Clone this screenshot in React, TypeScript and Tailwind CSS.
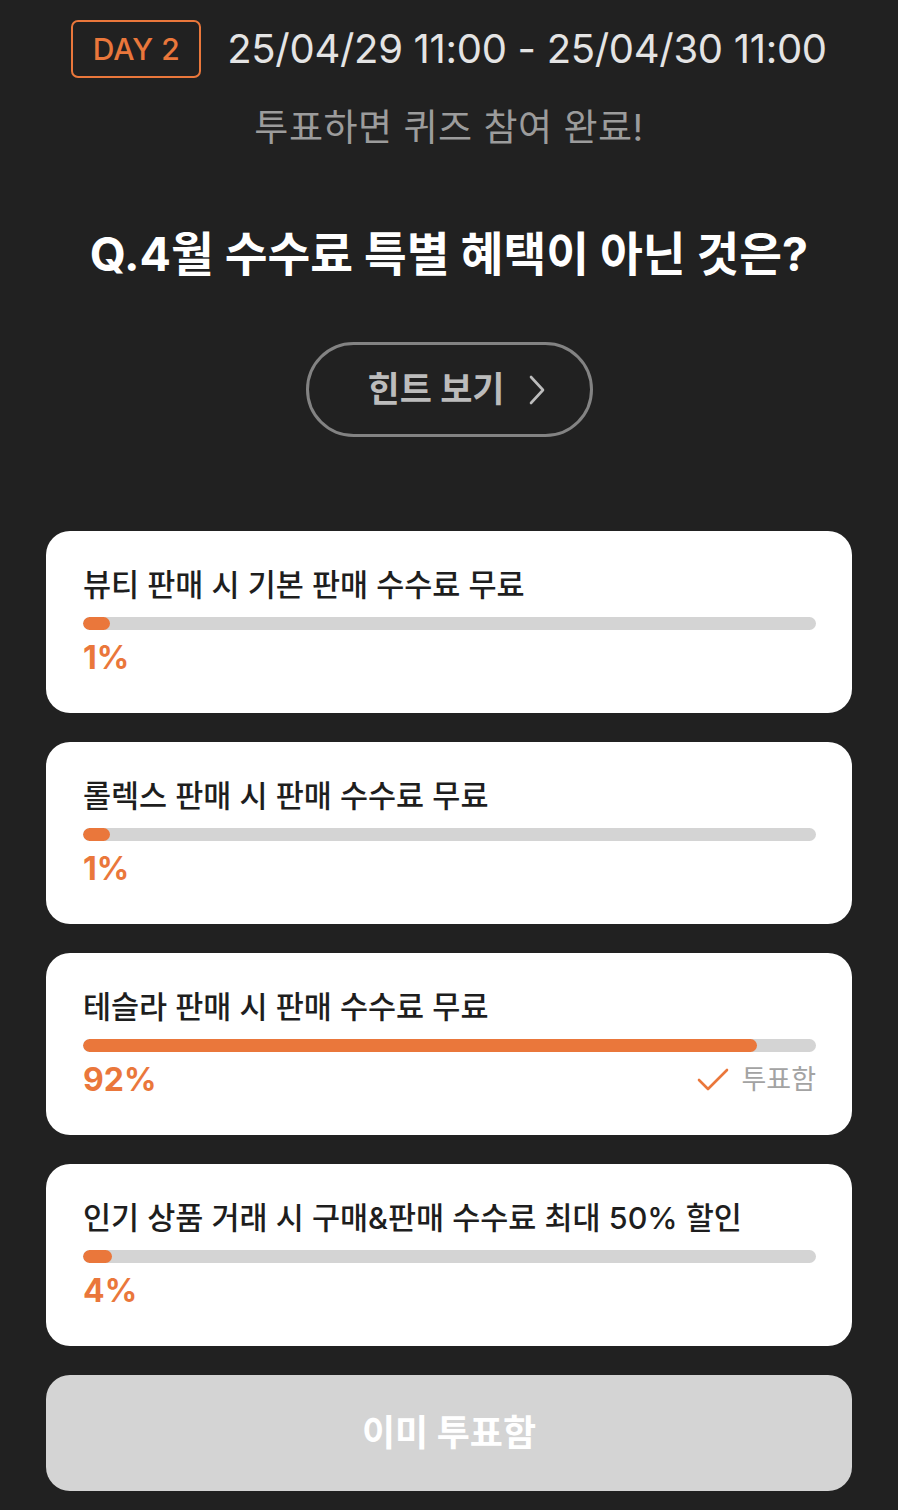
import React from 'react';

interface Option {
  label: string;
  pct: number;
  voted?: boolean;
}

const options: Option[] = [
  { label: '뷰티 판매 시 기본 판매 수수료 무료', pct: 1 },
  { label: '롤렉스 판매 시 판매 수수료 무료', pct: 1 },
  { label: '테슬라 판매 시 판매 수수료 무료', pct: 92, voted: true },
  { label: '인기 상품 거래 시 구매&판매 수수료 최대 50% 할인', pct: 4 },
];

const font = { fontFamily: 'Inter, "Noto Sans CJK KR", sans-serif' };

const OptionCard: React.FC<{ option: Option }> = ({ option }) => {
  return (
    <div className="bg-white rounded-[24px] h-[182px] pl-[37px] pr-[36px] pt-[34px]">
      <div className="text-[30.5px] leading-[40px] text-[#1e1e1e] font-medium">{option.label}</div>
      <div className="mt-[12px] h-[13px] rounded-full bg-[#d4d4d4] overflow-hidden">
        <div
          className="h-full rounded-full bg-[#ea773b]"
          style={{ width: `${Math.max(option.pct, 3.7)}%` }}
        />
      </div>
      <div className="mt-[8px] flex items-center justify-between">
        <span className="text-[32px] leading-[40px] font-bold text-[#ea773b]">{option.pct}%</span>
        {option.voted && (
          <span className="flex items-center gap-[12px] text-[27px] leading-[40px] text-[#a3a3a3]">
            <svg width="32" height="24" viewBox="0 0 32 24" fill="none">
              <path d="M2 12 L11 21 L30 2" stroke="#ea773b" strokeWidth="2.6" strokeLinecap="round" strokeLinejoin="round" />
            </svg>
            투표함
          </span>
        )}
      </div>
    </div>
  );
};

const App: React.FC = () => {
  return (
    <div className="w-[898px] h-[1510px] bg-[#212121] overflow-hidden" style={font}>
      <div className="pt-[20px] flex items-center justify-center gap-[26px]">
        <div className="h-[58px] w-[130px] border-2 border-[#ea773b] rounded-[7px] flex items-center justify-center text-[30px] font-medium text-[#ea773b]">
          DAY 2
        </div>
        <div className="text-[40px] leading-[58px] text-[#e4e4e4] tracking-[-0.3px]">25/04/29 11:00 - 25/04/30 11:00</div>
      </div>
      <div className="mt-[28px] text-center text-[37px] leading-[44px] text-[#9c9c9c] tracking-[0.5px]">투표하면 퀴즈 참여 완료!</div>
      <div className="mt-[76px] text-center text-[46.5px] leading-[56px] font-bold text-white">
        Q.4월 수수료 특별 혜택이 아닌 것은?
      </div>
      <div className="mt-[60px] flex justify-center">
        <div className="w-[287px] h-[95px] pl-[14px] rounded-full border-[3px] border-[#838383] flex items-center justify-center gap-[24px] text-[#bcbcbc]">
          <span className="text-[35px] font-bold">힌트 보기</span>
          <svg width="16" height="30" viewBox="0 0 16 30" fill="none">
            <path d="M2 2 L14 15 L2 28" stroke="#bcbcbc" strokeWidth="2.6" strokeLinecap="round" strokeLinejoin="round" />
          </svg>
        </div>
      </div>
      <div className="mt-[94px] px-[46px] flex flex-col gap-[29px]">
        {options.map((o) => (
          <OptionCard key={o.label} option={o} />
        ))}
        <div className="h-[116px] rounded-[24px] bg-[#d4d4d4] flex items-center justify-center text-[36px] font-bold text-white">
          이미 투표함
        </div>
      </div>
    </div>
  );
};

export default App;
